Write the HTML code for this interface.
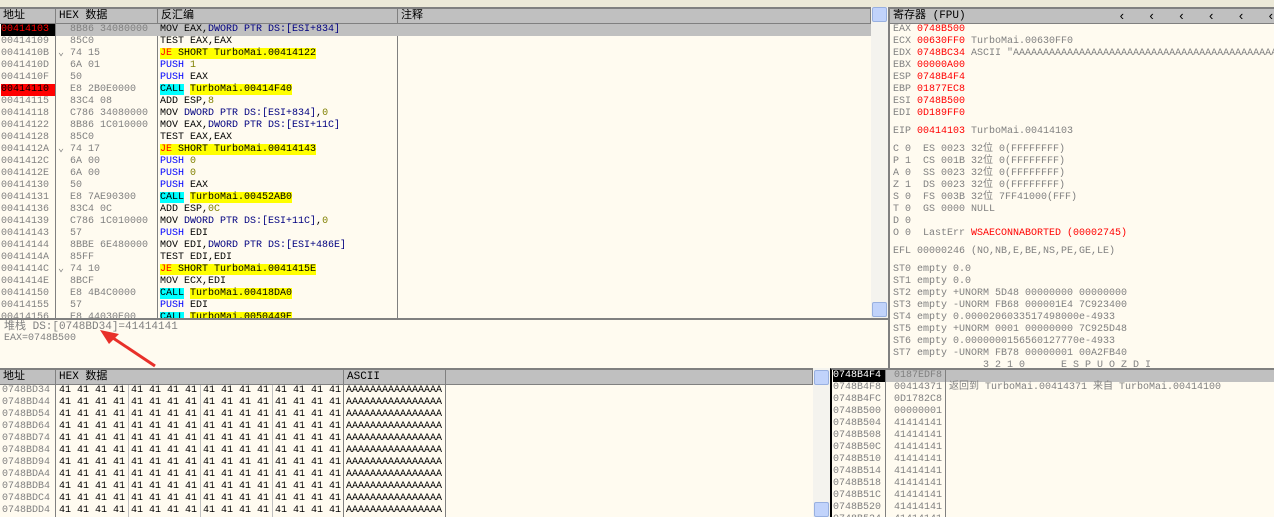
<!DOCTYPE html><html><head><meta charset="utf-8"><style>
*{margin:0;padding:0;box-sizing:border-box}
body{width:1274px;height:517px;overflow:hidden;background:#ece9d8;font-family:"Liberation Mono","Noto Sans CJK SC",monospace;font-size:10px;position:relative}
.p{position:absolute;background:#fffbf0;overflow:hidden}
.r{position:absolute;height:12px;line-height:12px;white-space:pre}
.hd{position:absolute;height:15px;line-height:15px;background:#c0c0c0;border-right:1px solid #808080;border-bottom:1px solid #808080;padding-left:3px;font-size:11px;color:#000;font-family:"Liberation Mono","WenQuanYi Zen Hei",monospace}
.g{color:#808080}.b{color:#0000ff}.n{color:#000080}.o{color:#808000}.rd{color:#f00}
.y{background:#ffff00}.c{background:#00ffff}
.vl{position:absolute;width:1px;background:#808080}
.sb{position:absolute;background:#f4f3ee}
.btn{position:absolute;width:15px;height:15px;background:#c1d3fb;border:1px solid #98b0e0;border-radius:2px}
</style></head><body>
<div class="p" style="left:0;top:7px;width:871px;height:311px;border-top:2px solid #808080">
<div class="hd" style="left:0;top:0;width:56px">地址</div>
<div class="hd" style="left:56px;top:0;width:102px">HEX 数据</div>
<div class="hd" style="left:158px;top:0;width:240px">反汇编</div>
<div class="hd" style="left:398px;top:0;width:473px">注释</div>
<div class="vl" style="left:55px;top:15px;height:300px"></div>
<div class="vl" style="left:157px;top:15px;height:300px"></div>
<div class="vl" style="left:397px;top:15px;height:300px"></div>
<div style="position:absolute;left:56px;top:15px;width:815px;height:12px;background:#c0c0c0"></div>
<div id="d"></div>
</div>
<div class="sb" style="left:871px;top:7px;width:17px;height:311px"></div>
<div class="btn" style="left:872px;top:7px"></div>
<div class="btn" style="left:872px;top:302px"></div>
<div class="p" style="left:0;top:318px;width:888px;height:50px;border-top:2px solid #808080">
<div class="r g" style="left:4px;top:1px;font-size:11px">堆栈 DS:[0748BD34]=41414141</div>
<div class="r g" style="left:4px;top:13px">EAX=0748B500</div>
<svg style="position:absolute;left:95px;top:8px" width="70" height="42"><line x1="12" y1="6" x2="60" y2="38" stroke="#e8302a" stroke-width="3"/><polygon points="5,2 24,6 14,16" fill="#e8302a"/></svg>
</div>
<div class="p" style="left:888px;top:7px;width:386px;height:361px;border-top:2px solid #808080;border-left:2px solid #808080">
<div class="hd" style="left:0;top:0;width:386px">寄存器 (FPU)<span style="position:absolute;left:228px;font-size:13px;letter-spacing:22px">‹‹‹‹‹‹</span></div>
<div id="reg"></div>
</div>
<div class="p" style="left:0;top:368px;width:813px;height:149px;border-top:2px solid #808080">
<div class="hd" style="left:0;top:0;width:56px">地址</div>
<div class="hd" style="left:56px;top:0;width:288px">HEX 数据</div>
<div class="hd" style="left:344px;top:0;width:102px">ASCII</div>
<div class="hd" style="left:446px;top:0;width:367px"></div>
<div class="vl" style="left:55px;top:15px;height:140px"></div>
<div class="vl" style="left:128px;top:15px;height:140px;background:#c0c0c0"></div>
<div class="vl" style="left:200px;top:15px;height:140px;background:#c0c0c0"></div>
<div class="vl" style="left:272px;top:15px;height:140px;background:#c0c0c0"></div>
<div class="vl" style="left:343px;top:15px;height:140px"></div>
<div class="vl" style="left:445px;top:15px;height:140px"></div>
<div id="m"></div>
</div>
<div class="sb" style="left:813px;top:368px;width:17px;height:149px"></div>
<div class="btn" style="left:814px;top:370px"></div>
<div class="btn" style="left:814px;top:502px"></div>
<div class="p" style="left:830px;top:368px;width:444px;height:149px;border-top:2px solid #808080;border-left:2px solid #000">
<div style="position:absolute;left:54px;top:0;width:390px;height:12px;background:#c0c0c0"></div>
<div class="vl" style="left:53px;top:0;height:150px"></div>
<div class="vl" style="left:113px;top:0;height:150px"></div>
<div id="s"></div>
</div>
<script>
function R(id,rows){let h='';rows.forEach((r,i)=>{h+=r(i)});document.getElementById(id).innerHTML=h}
const dis=[
["00414103","8B86 34080000",'MOV EAX,<span class="n">DWORD PTR DS:[ESI+834]</span>',1],
["00414109","85C0","TEST EAX,EAX"],
["0041410B","74 15",'<span class="y"><span class="rd">JE</span> SHORT TurboMai.00414122</span>',0,1],
["0041410D","6A 01",'<span class="b">PUSH</span> <span class="o">1</span>'],
["0041410F","50",'<span class="b">PUSH</span> EAX'],
["00414110","E8 2B0E0000",'<span class="c">CALL</span> <span class="y">TurboMai.00414F40</span>',2],
["00414115","83C4 08",'ADD ESP,<span class="o">8</span>'],
["00414118","C786 34080000 ",'MOV <span class="n">DWORD PTR DS:[ESI+834]</span>,<span class="o">0</span>'],
["00414122","8B86 1C010000",'MOV EAX,<span class="n">DWORD PTR DS:[ESI+11C]</span>'],
["00414128","85C0","TEST EAX,EAX"],
["0041412A","74 17",'<span class="y"><span class="rd">JE</span> SHORT TurboMai.00414143</span>',0,1],
["0041412C","6A 00",'<span class="b">PUSH</span> <span class="o">0</span>'],
["0041412E","6A 00",'<span class="b">PUSH</span> <span class="o">0</span>'],
["00414130","50",'<span class="b">PUSH</span> EAX'],
["00414131","E8 7AE90300",'<span class="c">CALL</span> <span class="y">TurboMai.00452AB0</span>'],
["00414136","83C4 0C",'ADD ESP,<span class="o">0C</span>'],
["00414139","C786 1C010000 ",'MOV <span class="n">DWORD PTR DS:[ESI+11C]</span>,<span class="o">0</span>'],
["00414143","57",'<span class="b">PUSH</span> EDI'],
["00414144","8BBE 6E480000",'MOV EDI,<span class="n">DWORD PTR DS:[ESI+486E]</span>'],
["0041414A","85FF","TEST EDI,EDI"],
["0041414C","74 10",'<span class="y"><span class="rd">JE</span> SHORT TurboMai.0041415E</span>',0,1],
["0041414E","8BCF","MOV ECX,EDI"],
["00414150","E8 4B4C0000",'<span class="c">CALL</span> <span class="y">TurboMai.00418DA0</span>'],
["00414155","57",'<span class="b">PUSH</span> EDI'],
["00414156","E8 44030E00",'<span class="c">CALL</span> <span class="y">TurboMai.0050449E</span>']];
R('d',dis.map(d=>i=>{const t=15+i*12;let a=d[3]==1?'background:#000;color:#f00':d[3]==2?'background:#f00;color:#000':'color:#808080';
return `<div class="r" style="left:1px;top:${t}px;width:54px;${a}">${d[0]}</div>`+(d[4]?`<div class="r g" style="left:58px;top:${t}px">⌄</div>`:'')+`<div class="r g" style="left:70px;top:${t}px;width:87px;overflow:hidden">${d[1]}</div><div class="r" style="left:160px;top:${t}px">${d[2]}</div>`}));
const reg=[[0,'EAX <span class="rd">0748B500</span>'],[12,'ECX <span class="rd">00630FF0</span> TurboMai.00630FF0'],[24,'EDX <span class="rd">0748BC34</span> ASCII "AAAAAAAAAAAAAAAAAAAAAAAAAAAAAAAAAAAAAAAAAAAA'],[36,'EBX <span class="rd">00000A00</span>'],[48,'ESP <span class="rd">0748B4F4</span>'],[60,'EBP <span class="rd">01877EC8</span>'],[72,'ESI <span class="rd">0748B500</span>'],[84,'EDI <span class="rd">0D189FF0</span>'],[102,'EIP <span class="rd">00414103</span> TurboMai.00414103'],[120,'C 0  ES 0023 32位 0(FFFFFFFF)'],[132,'P 1  CS 001B 32位 0(FFFFFFFF)'],[144,'A 0  SS 0023 32位 0(FFFFFFFF)'],[156,'Z 1  DS 0023 32位 0(FFFFFFFF)'],[168,'S 0  FS 003B 32位 7FF41000(FFF)'],[180,'T 0  GS 0000 NULL'],[192,'D 0'],[204,'O 0  LastErr <span class="rd">WSAECONNABORTED (00002745)</span>'],[222,'EFL 00000246 (NO,NB,E,BE,NS,PE,GE,LE)'],[240,'ST0 empty 0.0'],[252,'ST1 empty 0.0'],[264,'ST2 empty +UNORM 5D48 00000000 00000000'],[276,'ST3 empty -UNORM FB68 000001E4 7C923400'],[288,'ST4 empty 0.0000206033517498000e-4933'],[300,'ST5 empty +UNORM 0001 00000000 7C925D48'],[312,'ST6 empty 0.0000000156560127770e-4933'],[324,'ST7 empty -UNORM FB78 00000001 00A2FB40'],[336,'               3 2 1 0      E S P U O Z D I']];
R('reg',reg.map(r=>i=>`<div class="r g" style="left:3px;top:${15+r[0]}px">${r[1]}</div>`));
const ma=["0748BD34","0748BD44","0748BD54","0748BD64","0748BD74","0748BD84","0748BD94","0748BDA4","0748BDB4","0748BDC4","0748BDD4"];
R('m',ma.map(a=>i=>{const t=15+i*12;let h=`<div class="r g" style="left:2px;top:${t}px">${a}</div>`;
[59,131,203,275].forEach(x=>{h+=`<div class="r" style="left:${x}px;top:${t}px">41 41 41 41</div>`});
return h+`<div class="r" style="left:346px;top:${t}px">AAAAAAAAAAAAAAAA</div>`}));
const st=[["0748B4F4","0187EDF8"],["0748B4F8","00414371","返回到 TurboMai.00414371 来自 TurboMai.00414100"],["0748B4FC","0D1782C8"],["0748B500","00000001"],["0748B504","41414141"],["0748B508","41414141"],["0748B50C","41414141"],["0748B510","41414141"],["0748B514","41414141"],["0748B518","41414141"],["0748B51C","41414141"],["0748B520","41414141"],["0748B524","41414141"]];
R('s',st.map(s=>i=>{const t=i*12;return `<div class="r" style="left:1px;top:${t}px;width:52px;${i==0?'background:#000;color:#fff':'color:#808080'}">${s[0]}</div><div class="r g" style="left:62px;top:${t}px">${s[1]}</div>`+(s[2]?`<div class="r g" style="left:117px;top:${t}px">${s[2]}</div>`:'')}));
</script>
</body></html>
